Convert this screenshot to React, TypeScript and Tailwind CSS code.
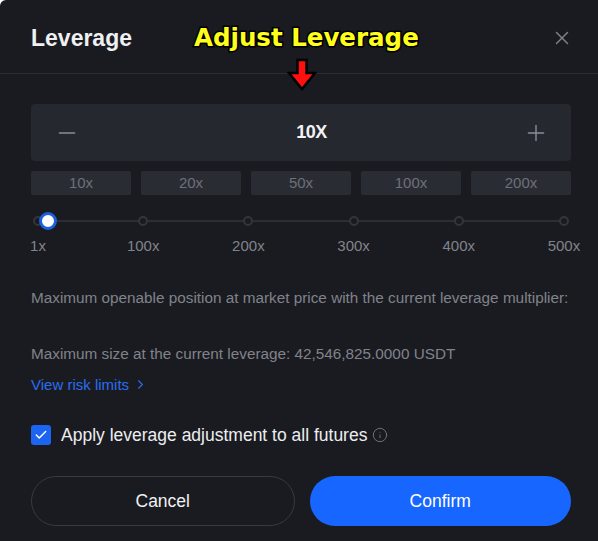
import React from 'react';
import { Check, ChevronRight, Info, Minus, Plus, X } from 'lucide-react';

const presets = ['10x', '20x', '50x', '100x', '200x'];
const ticks = ['1x', '100x', '200x', '300x', '400x', '500x'];

export default function App() {
  return (
    <div className="relative w-[598px] h-[541px] bg-[#1a1b20] rounded-tl-md overflow-hidden font-['Liberation_Sans',Arial,sans-serif]">
      {/* header */}
      <div className="h-[74px] flex items-center justify-between pl-[31px] pr-[25px] pt-[3px] border-b border-[#2a2c33]">
        <h1 className="text-[23px] font-bold text-[#eef0f2]">Leverage</h1>
        <X className="w-[22px] h-[22px] text-[#80838c]" strokeWidth={1.5} />
      </div>

      {/* annotation overlay */}
      <div className="absolute left-[194px] top-[26px] text-[24.5px] font-bold leading-none text-[#ffff1a] font-['DejaVu_Sans',sans-serif] [-webkit-text-stroke:3px_#000] [paint-order:stroke_fill]">
        Adjust Leverage
      </div>
      <svg className="absolute left-[287px] top-[58px]" width="30" height="33" viewBox="0 0 30 33">
        <polygon
          points="10.5,2 19.5,2 19.5,15 28,15 15,31 2,15 10.5,15"
          fill="#ff1010"
          stroke="#000"
          strokeWidth="2.5"
          strokeLinejoin="miter"
        />
      </svg>

      <div className="pl-[31px] pr-[27px] pt-[30px]">
        {/* stepper */}
        <div className="h-[57px] bg-[#262830] rounded-sm flex items-center justify-between pl-[23px] pr-[22px]">
          <Minus className="w-[26px] h-[26px] text-[#8a8d95]" strokeWidth={1.3} />
          <span className="translate-x-[10px] text-[18px] font-bold text-[#f2f3f5] tracking-[-0.5px]">10X</span>
          <Plus className="w-[26px] h-[26px] text-[#8a8d95]" strokeWidth={1.3} />
        </div>

        {/* presets */}
        <div className="mt-[10px] grid grid-cols-5 gap-[10px]">
          {presets.map((p) => (
            <div
              key={p}
              className="h-[24px] bg-[#2a2c33] rounded-[2px] flex items-center justify-center text-[15px] text-[#6d7079]"
            >
              {p}
            </div>
          ))}
        </div>

        {/* slider */}
        <div className="relative mt-[16px] h-[20px]">
          <div className="absolute left-[7px] right-[7px] top-[9px] h-[2px] bg-[#2c2e35]" />
          <div className="relative h-full flex items-center justify-between">
            {ticks.map((t) => (
              <div key={t} className="w-[14px] flex justify-center">
                <div className="w-[10px] h-[10px] rounded-full border-2 border-[#33353d] bg-[#1a1b20]" />
              </div>
            ))}
          </div>
          <div className="absolute left-[8px] top-[1px] w-[18px] h-[18px] rounded-full bg-white border-[3px] border-[#1c5fe0]" />
        </div>
        <div className="mt-[4px] flex justify-between">
          {ticks.map((t) => (
            <div key={t} className="w-[14px] flex justify-center">
              <span className="text-[15px] text-[#80838b] whitespace-nowrap">{t}</span>
            </div>
          ))}
        </div>

        {/* info */}
        <p className="mt-[30px] text-[15.3px] text-[#80838b] leading-[20px] whitespace-nowrap">
          Maximum openable position at market price with the current leverage multiplier:
        </p>
        <p className="mt-[36px] text-[15.3px] text-[#80838b] leading-[20px]">
          Maximum size at the current leverage: 42,546,825.0000 USDT
        </p>
        <div className="mt-[11px] flex items-center gap-[4px] text-[15px] text-[#2a6df0] leading-[20px]">
          View risk limits
          <ChevronRight className="w-[15px] h-[15px]" strokeWidth={1.75} />
        </div>

        {/* checkbox */}
        <div className="mt-[27px] flex items-center gap-[10px]">
          <div className="w-[20px] h-[20px] rounded-[3px] bg-[#1c65f2] flex items-center justify-center">
            <Check className="w-[14px] h-[14px] text-white" strokeWidth={2.5} />
          </div>
          <span className="text-[17.5px] text-[#eceef0]">Apply leverage adjustment to all futures</span>
          <Info className="w-[16px] h-[16px] -ml-[5px] text-[#6d7079]" strokeWidth={1.5} />
        </div>

        {/* actions */}
        <div className="mt-[28px] flex gap-[15px]">
          <button className="flex-1 h-[50px] rounded-full border border-[#383a41] text-[17.5px] text-[#f0f1f3]">
            Cancel
          </button>
          <button className="flex-1 h-[50px] rounded-full bg-[#1766ff] text-[17.5px] text-white">
            Confirm
          </button>
        </div>
      </div>
    </div>
  );
}
